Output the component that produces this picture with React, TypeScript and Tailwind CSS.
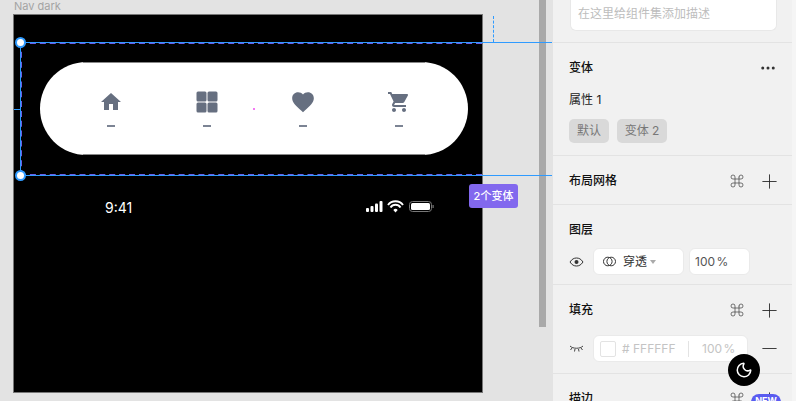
import React from 'react';
import { Command, Minus, Moon, MoreHorizontal, Plus } from 'lucide-react';

const HomeIcon = () => (
  <svg width="24" height="24" viewBox="0 0 24 24" fill="#666f80">
    <path d="M10 20v-6h4v6h5v-8h3L12 3 2 12h3v8z" />
  </svg>
);

const GridIcon = () => (
  <svg width="24" height="24" viewBox="0 0 24 24" fill="#666f80">
    <rect x="1.5" y="1.5" width="10" height="10" rx="1.5" />
    <rect x="12.5" y="1.5" width="10" height="10" rx="1.5" />
    <rect x="1.5" y="12.5" width="10" height="10" rx="1.5" />
    <rect x="12.5" y="12.5" width="10" height="10" rx="1.5" />
  </svg>
);

const HeartIcon = () => (
  <svg width="26" height="26" viewBox="0 0 24 24" fill="#666f80">
    <path d="M12 21.35l-1.45-1.32C5.4 15.36 2 12.28 2 8.5 2 5.42 4.42 3 7.5 3c1.74 0 3.41.81 4.5 2.09C13.09 3.81 14.76 3 16.5 3 19.58 3 22 5.42 22 8.5c0 3.78-3.4 6.86-8.55 11.54L12 21.35z" />
  </svg>
);

const CartIcon = () => (
  <svg width="24" height="24" viewBox="0 0 24 24" fill="#666f80">
    <path d="M7 18c-1.1 0-1.99.9-1.99 2S5.9 22 7 22s2-.9 2-2-.9-2-2-2zM1 2v2h2l3.6 7.59-1.35 2.45c-.16.28-.25.61-.25.96 0 1.1.9 2 2 2h12v-2H7.42c-.14 0-.25-.11-.25-.25l.03-.12.9-1.63h7.45c.75 0 1.41-.41 1.75-1.03l3.58-6.49c.08-.14.12-.31.12-.48 0-.55-.45-1-1-1H5.21l-.94-2H1zm16 16c-1.1 0-1.99.9-1.99 2s.89 2 1.99 2 2-.9 2-2-.9-2-2-2z" />
  </svg>
);

const StatusIcons = () => (
  <svg width="68" height="14" viewBox="0 0 68 14">
    <rect x="0" y="8" width="3" height="4" rx="1" fill="#fff" />
    <rect x="4.5" y="6" width="3" height="6" rx="1" fill="#fff" />
    <rect x="9" y="3.5" width="3" height="8.5" rx="1" fill="#fff" />
    <rect x="13.5" y="1" width="3" height="11" rx="1" fill="#fff" />
    <path d="M22 5 A9.5 9.5 0 0 1 37 5" stroke="#fff" strokeWidth="2" fill="none" />
    <path d="M24.5 7.5 A6 6 0 0 1 34.5 7.5" stroke="#fff" strokeWidth="2" fill="none" />
    <path d="M27.3 10 L29.5 12.5 L31.7 10 A3 3 0 0 0 27.3 10 Z" fill="#fff" />
    <rect x="43.5" y="1.5" width="22" height="10" rx="3" stroke="#777" fill="none" />
    <rect x="45" y="3" width="19" height="7" rx="1.5" fill="#fff" />
    <rect x="66.5" y="5" width="1.2" height="3" fill="#777" />
  </svg>
);

const EyeIcon = () => (
  <svg width="15" height="10" viewBox="0 0 15 10" fill="none" stroke="#333" strokeWidth="1">
    <path d="M1 5C3 2 5 1 7.5 1S12 2 14 5C12 8 10 9 7.5 9S3 8 1 5Z" />
    <circle cx="7.5" cy="5" r="2" fill="#333" stroke="none" />
  </svg>
);

const ClosedEyeIcon = () => (
  <svg width="15" height="9" viewBox="0 0 15 9" fill="none" stroke="#444" strokeWidth="1">
    <path d="M1 2C4 5 11 5 14 2M3 4 1.5 6M6 5 5.5 7.5M9.5 5 10 7.5M12 4 13.5 6" />
  </svg>
);

const BlendIcon = () => (
  <svg width="13" height="13" viewBox="0 0 13 13" fill="none" stroke="#333" strokeWidth="1">
    <circle cx="4.8" cy="6.5" r="4.3" />
    <circle cx="8.2" cy="6.5" r="4.3" />
  </svg>
);

const navIcons = [<HomeIcon key="home" />, <GridIcon key="grid" />, <HeartIcon key="heart" />, <CartIcon key="cart" />];

const Section = ({ title, actions, children, className }: { title: string; actions?: React.ReactNode; children?: React.ReactNode; className?: string }) => (
  <section className={`border-b border-[#e3e3e3] pl-[16px] pr-[15px] ${className ?? ''}`}>
    <div className="flex h-[50px] items-center justify-between">
      <h3 className="text-[12px] font-medium text-[#111]">{title}</h3>
      {actions}
    </div>
    {children}
  </section>
);

const GridActions = () => (
  <div className="-mr-[4px] flex items-center gap-[13px]">
    <Command size={16} strokeWidth={1.1} className="text-[#444]" />
    <Plus size={23} strokeWidth={0.9} className="text-[#222]" />
  </div>
);

export default function App() {
  return (
    <div className="flex h-[401px] w-[796px] overflow-hidden bg-[#e3e3e3] font-['Inter','Noto_Sans_CJK_SC',sans-serif]">
      {/* CANVAS */}
      <main className="relative w-[539px] shrink-0">
        <p className="absolute left-[14px] top-[-2px] text-[11px] text-[#a3a3a3]">Nav dark</p>

        <div className="absolute left-[13px] top-[14px] h-[379px] w-[470px] border border-[#777] bg-black">
          <div className="pl-[26px] pt-[47px]">
            <div className="relative grid h-[93px] w-[428px] grid-cols-4 rounded-full bg-white pl-[23px] pr-[21px]">
              <div className="absolute left-[43px] right-[43px] top-0 h-px bg-[#888]" />
              <div className="absolute bottom-0 left-[43px] right-[43px] h-px bg-[#888]" />
              {navIcons.map((icon, i) => (
                <div key={i} className="flex flex-col items-center pt-[28px]">
                  <div className="flex h-[24px] items-center">{icon}</div>
                  <div className="mt-[11px] h-[2px] w-[8px] bg-[#7c8494]" />
                </div>
              ))}
            </div>
            <div className="flex w-[394px] items-center justify-between pl-[65px] pt-[42px]">
              <span className="mt-[2px] text-[14px] leading-[18px] text-white">9:41</span>
              <StatusIcons />
            </div>
          </div>
        </div>

        {/* selection overlay */}
        <div className="absolute left-[20px] top-[42px] h-[134px] w-[462px] border-2 border-r-0 border-dashed border-[#6a5fe8]" />
        <div className="absolute left-[20px] top-[42px] h-px w-[532px] bg-[#2f9bff]" />
        <div className="absolute left-[20px] top-[175px] h-px w-[532px] bg-[#2f9bff]" />
        <div className="absolute left-[20px] top-[42px] h-[134px] w-px bg-[#2f9bff]" />
        <div className="absolute left-[15px] top-[37px] h-[11px] w-[11px] rounded-full border-2 border-[#2f9bff] bg-white" />
        <div className="absolute left-[15px] top-[170px] h-[11px] w-[11px] rounded-full border-2 border-[#2f9bff] bg-white" />
        <div className="absolute left-[493px] top-[16px] h-[26px] border-l border-dashed border-[#2f9bff]" />
        <div className="absolute left-[14px] top-[109px] w-[6px] border-t border-dashed border-[#2f9bff]" />
        <div className="absolute left-[253px] top-[108px] h-[2px] w-[2px] rounded-full bg-[#f04cf0]" />
        <div className="absolute left-[469px] top-[184px] flex h-[24px] w-[49px] items-center justify-center rounded-[3px] bg-[#8268ee] text-[11px] font-medium text-white">2个变体</div>
      </main>

      {/* SCROLLBAR */}
      <div className="w-[14px] shrink-0">
        <div className="h-[327px] w-[7px] bg-[#a9a9a9]" />
      </div>

      {/* RIGHT PANEL */}
      <aside className="relative w-[239px] shrink-0 bg-[#f1f1f1]">
        <div className="h-[43px] border-b border-[#e3e3e3] pl-[17px] pr-[15px]">
          <div className="flex h-[31px] items-center rounded-b-[6px] border border-t-0 border-[#e8e8e8] bg-white px-[7px] pb-[2px] text-[12px] text-[#bdbdbd]">在这里给组件集添加描述</div>
        </div>

        <section className="h-[113px] border-b border-[#e3e3e3] pl-[16px] pr-[15px]">
          <div className="flex h-[50px] items-center justify-between">
            <h3 className="text-[12px] font-medium text-[#111]">变体</h3>
            <MoreHorizontal size={18} className="text-[#333]" />
          </div>
          <p className="-mt-[2px] text-[12px] leading-[18px] text-[#222]">属性 1</p>
          <div className="mt-[10px] flex gap-[8px]">
            <span className="flex h-[24px] w-[40px] items-center justify-center rounded-[5px] bg-[#d9d9d9] text-[12px] text-[#777]">默认</span>
            <span className="flex h-[24px] w-[50px] items-center justify-center rounded-[5px] bg-[#d9d9d9] text-[12px] text-[#777]">变体 2</span>
          </div>
        </section>

        <Section title="布局网格" actions={<GridActions />} className="h-[49px]" />

        <Section title="图层" className="h-[80px]">
          <div className="-mt-[7px] flex items-center">
            <EyeIcon />
            <div className="ml-[9px] flex h-[27px] w-[91px] items-center gap-[7px] rounded-[6px] border border-[#eaeaea] bg-white pl-[9px] text-[12px] text-[#333]">
              <BlendIcon />
              <span>穿透</span>
              <span className="-ml-[4px] mt-[1px] h-0 w-0 border-x-[3px] border-t-[4px] border-x-transparent border-t-[#aaa]" />
            </div>
            <div className="ml-[5px] flex h-[27px] w-[61px] items-center rounded-[6px] border border-[#eaeaea] bg-white pl-[5px] text-[12px] text-[#555] [word-spacing:-2px]">100 %</div>
          </div>
        </Section>

        <Section title="填充" actions={<GridActions />} className="h-[89px]">
          <div className="flex items-center">
            <ClosedEyeIcon />
            <div className="ml-[9px] flex h-[27px] w-[155px] shrink-0 items-center rounded-[6px] border border-[#eaeaea] bg-white pl-[6px] text-[12px] text-[#c4c4c4]">
              <span className="h-[16px] w-[16px] rounded-[2px] border border-[#e3e3e3] bg-white" />
              <span className="ml-[6px] w-[66px]"># FFFFFF</span>
              <span className="h-[16px] border-l border-[#e3e3e3]" />
              <span className="ml-[13px] [word-spacing:-2px]">100 %</span>
            </div>
            <Minus size={23} strokeWidth={0.9} className="-mr-[4px] ml-[10px] shrink-0 text-[#222]" />
          </div>
        </Section>

        <div className="flex h-[50px] items-center justify-between pl-[16px] pr-[15px]">
          <h3 className="text-[12px] font-medium text-[#111]">描边</h3>
          <GridActions />
        </div>

        {/* floating */}
        <button className="absolute left-[175px] top-[354px] flex h-[32px] w-[32px] items-center justify-center rounded-full bg-black">
          <Moon size={18} strokeWidth={2} className="text-white" />
        </button>
        <span className="absolute left-[198px] top-[394px] h-[16px] w-[30px] rounded-full bg-[#5a5cf0] text-center text-[9px] font-bold leading-[14px] text-white">NEW</span>
      </aside>

      <div className="flex-1 bg-[#f5f5f5]" />
    </div>
  );
}
